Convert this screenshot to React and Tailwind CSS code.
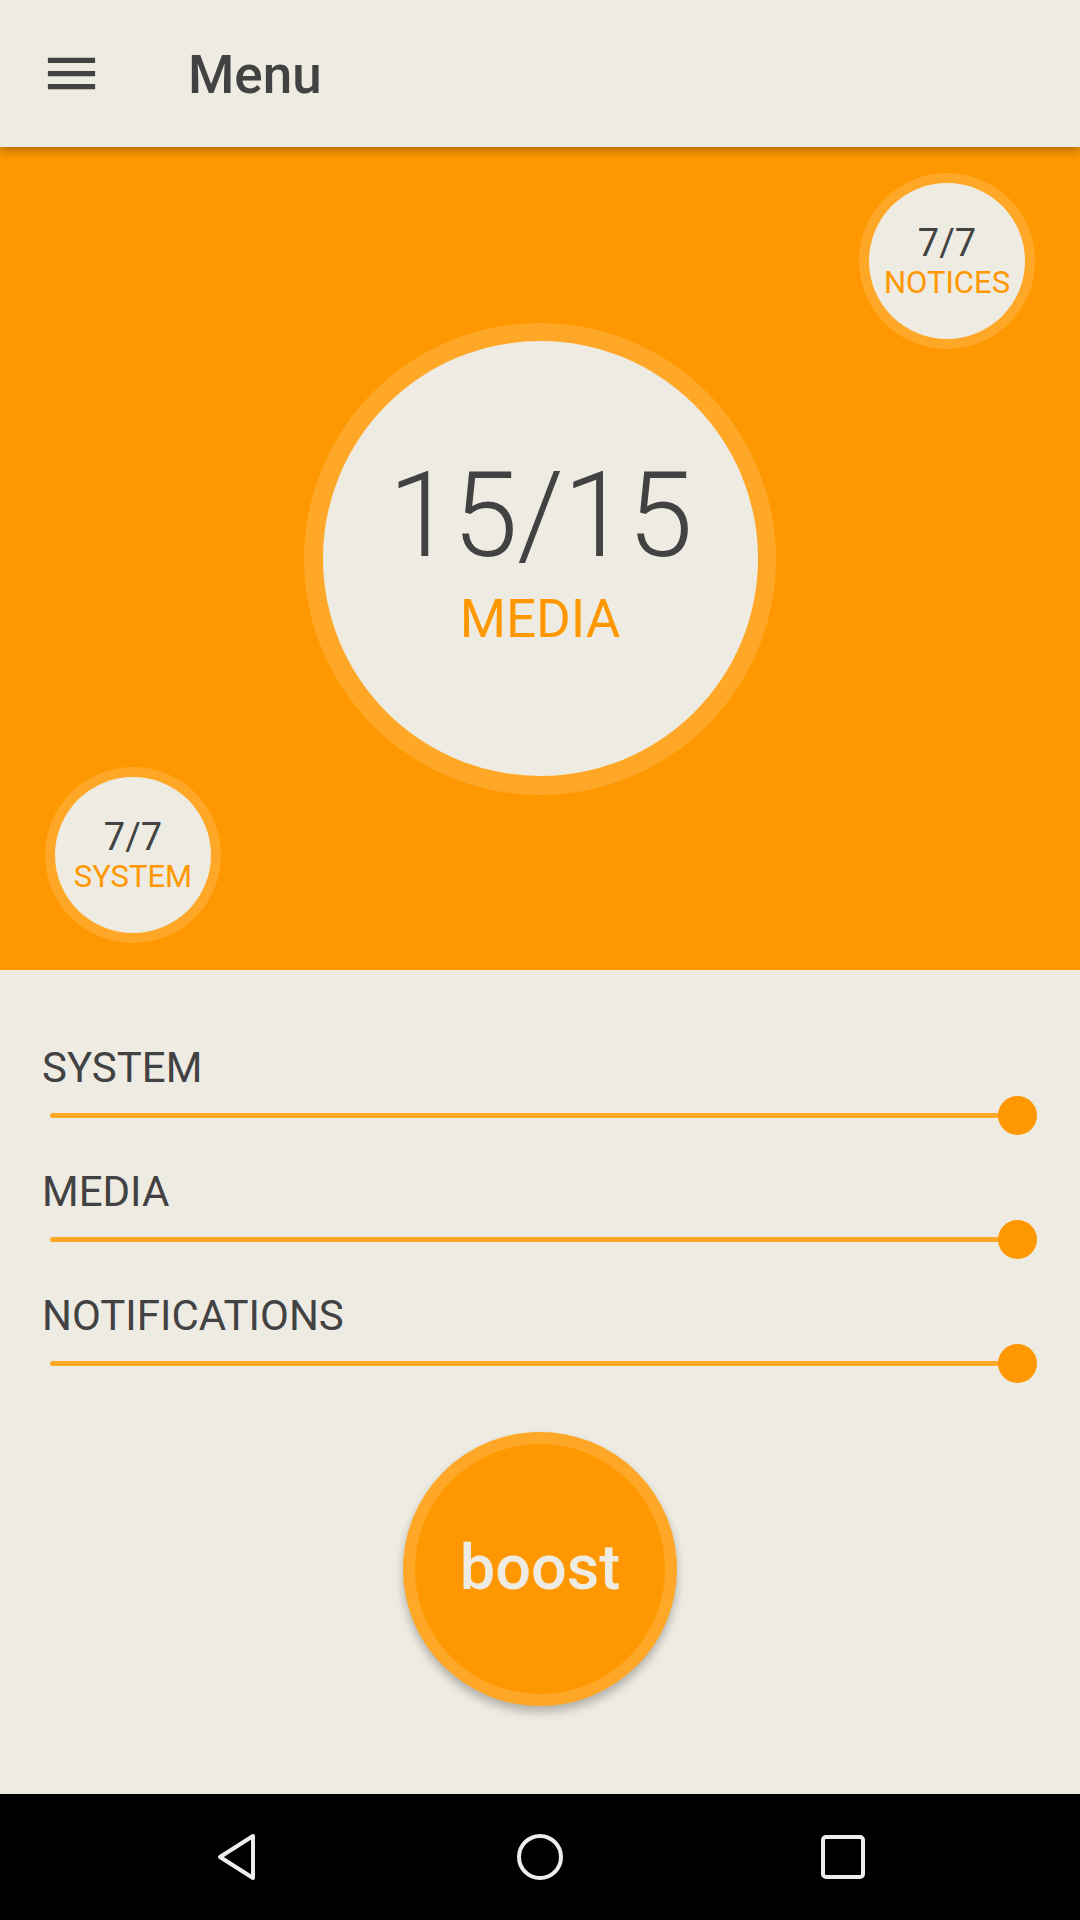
import React from 'react';

const sliders = ['SYSTEM', 'MEDIA', 'NOTIFICATIONS'];

const SmallGauge = ({ value, label }) => (
  <div className="w-[176px] h-[176px] rounded-full bg-[#ffa726] flex items-center justify-center">
    <div className="w-[156px] h-[156px] rounded-full bg-[#edebe2] flex flex-col items-center justify-center">
      <span className="text-[38px] leading-none text-[#424242]">{value}</span>
      <span className="mt-[5px] text-[31px] leading-none text-[#ff9800]">{label}</span>
    </div>
  </div>
);

const Slider = ({ label }) => (
  <div>
    <p className="pl-[42px] text-[42px] leading-none text-[#424242]">{label}</p>
    <div className="mt-[6px] h-[40px] flex items-center pl-[50px] pr-[43px]">
      <div className="flex-1 h-[5px] rounded-full bg-[#ffa726]" />
      <div className="w-[39px] h-[39px] rounded-full bg-[#ff9800] -ml-[2px]" />
    </div>
  </div>
);

const App = () => {
  return (
    <div
      className="w-[1080px] h-[1920px] flex flex-col bg-[#edebe2] overflow-hidden"
      style={{ fontFamily: 'Roboto, "Noto Sans", sans-serif' }}
    >
      {/* toolbar */}
      <header className="relative z-10 h-[147px] flex items-center bg-[#edebe2] shadow-[0_3px_10px_rgba(0,0,0,0.35)]">
        <svg viewBox="0 0 24 24" className="ml-[40px] w-[63px] h-[63px]" fill="#424242">
          <path d="M3 18h18v-2H3v2zm0-5h18v-2H3v2zm0-7v2h18V6H3z" />
        </svg>
        <h1 className="ml-[85px] pt-[4px] text-[53px] leading-none font-medium text-[#424242]">Menu</h1>
      </header>

      {/* gauges */}
      <section className="relative h-[823px] bg-[#ff9800] flex items-center justify-center">
        <div className="absolute top-[26px] right-[45px]">
          <SmallGauge value="7/7" label="NOTICES" />
        </div>
        <div className="w-[472px] h-[472px] rounded-full bg-[#ffa726] flex items-center justify-center">
          <div className="w-[435px] h-[435px] rounded-full bg-[#edebe2] flex flex-col items-center justify-center pb-[14px]">
            <span className="text-[118px] leading-none font-light tracking-[-1px] text-[#424242]">15/15</span>
            <span className="mt-[18px] text-[53px] leading-none text-[#ff9800]">MEDIA</span>
          </div>
        </div>
        <div className="absolute bottom-[27px] left-[45px]">
          <SmallGauge value="7/7" label="SYSTEM" />
        </div>
      </section>

      {/* volume sliders */}
      <main className="flex-1 flex flex-col pt-[77px]">
        <div className="flex flex-col gap-[36px]">
          {sliders.map((s) => (
            <Slider key={s} label={s} />
          ))}
        </div>
        <div className="mt-[49px] flex justify-center">
          <button className="w-[274px] h-[274px] rounded-full bg-[#ff9800] border-[12px] border-[#ffa726] shadow-[0_6px_10px_rgba(0,0,0,0.25)] flex items-center justify-center">
            <span className="text-[63px] leading-none font-medium text-[#edebe2] pb-[4px]">boost</span>
          </button>
        </div>
      </main>

      {/* nav bar */}
      <nav className="h-[126px] bg-black flex items-center justify-center gap-[255px]">
        <svg viewBox="0 0 48 48" className="w-[48px] h-[48px]" fill="none" stroke="#eeeeee" strokeWidth="4" strokeLinejoin="round">
          <path d="M40 3 L7 24 L40 45 Z" />
        </svg>
        <svg viewBox="0 0 48 48" className="w-[48px] h-[48px]" fill="none" stroke="#eeeeee" strokeWidth="4">
          <circle cx="24" cy="24" r="21" />
        </svg>
        <svg viewBox="0 0 48 48" className="w-[48px] h-[48px]" fill="none" stroke="#eeeeee" strokeWidth="4">
          <rect x="4" y="4" width="40" height="40" rx="3" />
        </svg>
      </nav>
    </div>
  );
};

export default App;
